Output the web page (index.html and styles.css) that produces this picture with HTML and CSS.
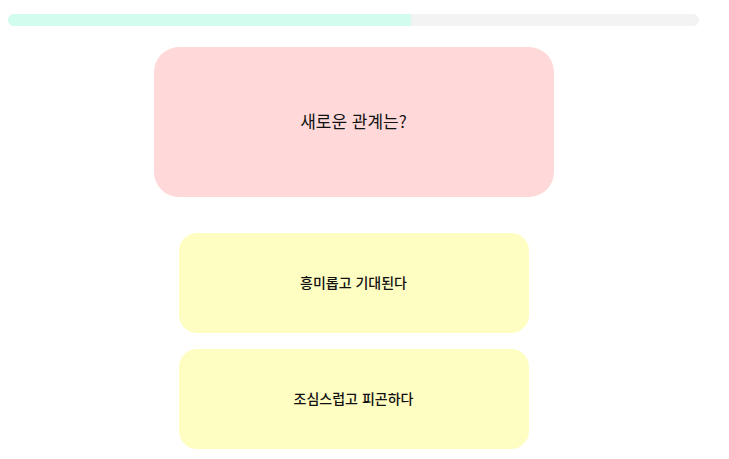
FILE: index.html
```html
<!DOCTYPE html>
<html lang="ko">
<head>
<meta charset="utf-8">
<link rel="stylesheet" href="styles.css">
</head>
<body>
<div class="wrap">
  <div class="progress"><div class="fill" style="width:58.3%"></div></div>
  <div class="question">새로운 관계는?</div>
  <div class="answers">
    <button class="answer">흥미롭고 기대된다</button>
    <button class="answer">조심스럽고 피곤하다</button>
  </div>
</div>
</body>
</html>
```
FILE: styles.css
```css
html, body {
  margin: 0;
  padding: 0;
  background: #ffffff;
}
body {
  padding: 8px;
  font-family: "Noto Sans CJK KR", "Noto Sans", sans-serif;
  color: #111;
}
.wrap {
  width: 691px;
  display: flex;
  flex-direction: column;
  align-items: center;
}
.progress {
  align-self: stretch;
  height: 12px;
  margin-top: 6px;
  background: #f3f3f3;
  border-radius: 6px;
  overflow: hidden;
}
.fill {
  height: 100%;
  background: #d2fdee;
}
.question {
  box-sizing: border-box;
  margin-top: 21px;
  width: 400px;
  height: 150px;
  padding-bottom: 4px;
  border-radius: 25px;
  background: #ffd9d9;
  display: flex;
  align-items: center;
  justify-content: center;
  font-size: 17px;
  font-weight: 400;
  line-height: 1;
}
.answers {
  margin-top: 36px;
  display: flex;
  flex-direction: column;
  gap: 16px;
}
.answer {
  box-sizing: border-box;
  width: 350px;
  height: 100px;
  border: none;
  border-radius: 18px;
  background: #fefdc2;
  font-family: "Noto Sans CJK KR", "Noto Sans", sans-serif;
  font-size: 14px;
  font-weight: 500;
  color: #111;
  padding: 0 0 3px 0;
  line-height: 1;
}
```
